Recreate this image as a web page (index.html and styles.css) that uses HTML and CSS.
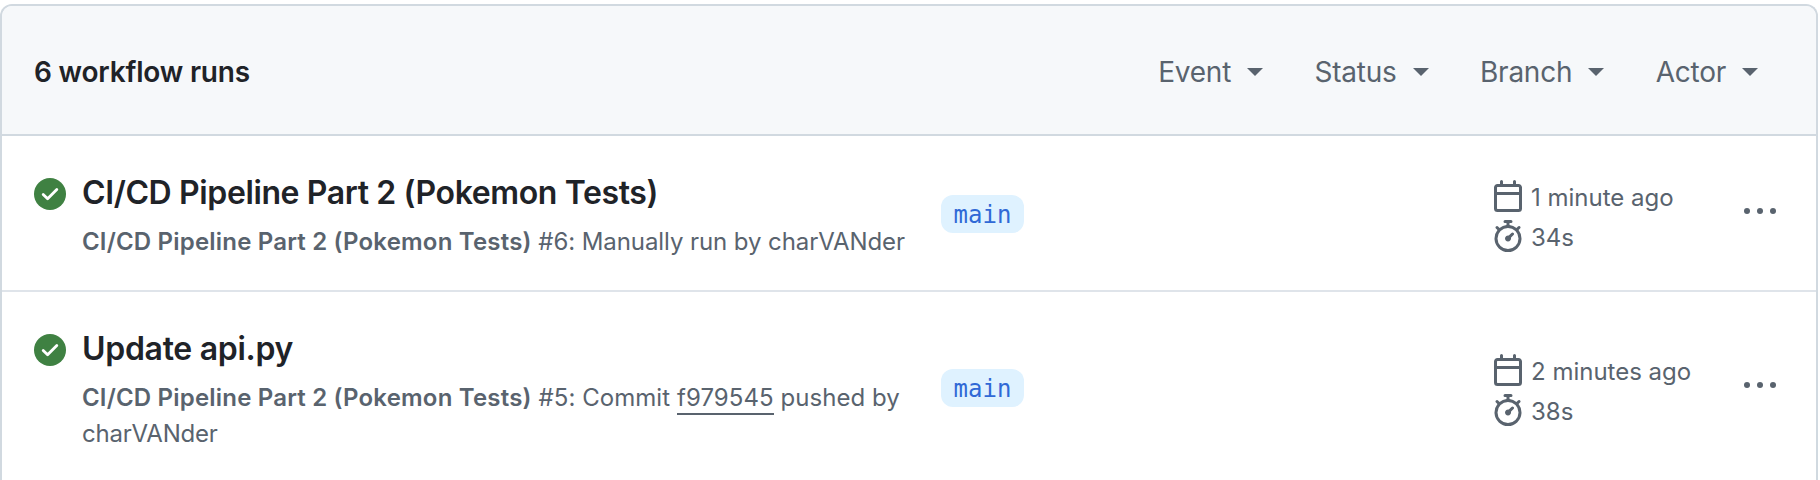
FILE: index.html
```html
<!DOCTYPE html>
<html lang="en">
<head>
<meta charset="utf-8">
<title>Workflow runs</title>
<link rel="stylesheet" href="styles.css">
</head>
<body>
<svg class="sprite" aria-hidden="true">
  <symbol id="check" viewBox="0 0 16 16"><circle cx="8" cy="8" r="8"/><path d="M4.6 8.2 6.8 10.4 11.4 5.7" fill="none" stroke="#fff" stroke-width="1.4" stroke-linecap="round" stroke-linejoin="round"/></symbol>
  <symbol id="calendar" viewBox="0 0 16 16"><path d="M4.75 0a.75.75 0 0 1 .75.75V2h5V.75a.75.75 0 0 1 1.5 0V2h1.25c.966 0 1.75.784 1.75 1.75v10.5A1.75 1.75 0 0 1 13.25 16H2.75A1.75 1.75 0 0 1 1 14.25V3.75C1 2.784 1.784 2 2.75 2H4V.75A.75.75 0 0 1 4.75 0ZM2.5 7.5v6.75c0 .138.112.25.25.25h10.5a.25.25 0 0 0 .25-.25V7.5Zm10.75-4H2.75a.25.25 0 0 0-.25.25V6h11V3.75a.25.25 0 0 0-.25-.25Z"/></symbol>
  <symbol id="stopwatch" viewBox="0 0 16 16"><path d="M5.75.75A.75.75 0 0 1 6.5 0h3a.75.75 0 0 1 0 1.5h-.75v1l-.001.041a6.724 6.724 0 0 1 3.464 1.435l.007-.006.75-.75a.749.749 0 0 1 1.275.326.749.749 0 0 1-.215.734l-.75.75-.006.007a6.75 6.75 0 1 1-10.548 0L2.72 5.03l-.75-.75a.751.751 0 0 1 .018-1.042.751.751 0 0 1 1.042-.018l.75.75.007.006A6.72 6.72 0 0 1 7.25 2.541V1.5H6.5a.75.75 0 0 1-.75-.75ZM8 14.5a5.25 5.25 0 1 0-.001-10.501A5.25 5.25 0 0 0 8 14.5Zm.389-6.7 1.33-1.33a.75.75 0 1 1 1.061 1.06L9.45 8.861A1.503 1.503 0 0 1 8 10.75a1.499 1.499 0 1 1 .389-2.95Z"/></symbol>
  <symbol id="kebab" viewBox="0 0 16 16"><circle cx="1.5" cy="7.5" r="1.5"/><circle cx="8" cy="7.5" r="1.5"/><circle cx="14.5" cy="7.5" r="1.5"/></symbol>
</svg>
<main class="box">
  <header class="box-header">
    <strong class="count">6 workflow runs</strong>
    <nav class="filters">
      <span class="filter">Event</span>
      <span class="filter">Status</span>
      <span class="filter">Branch</span>
      <span class="filter">Actor</span>
    </nav>
  </header>
  <article class="row">
    <svg class="icon check"><use href="#check"/></svg>
    <div class="info">
      <h2 class="title">CI/CD Pipeline Part 2 (Pokemon Tests)</h2>
      <p class="detail manual"><b>CI/CD Pipeline Part 2 (Pokemon Tests)</b> #6: Manually run by charVANder</p>
    </div>
    <div class="branch-cell"><span class="branch">main</span></div>
    <div class="meta">
      <div class="meta-line"><svg class="icon"><use href="#calendar"/></svg><span>1 minute ago</span></div>
      <div class="meta-line"><svg class="icon"><use href="#stopwatch"/></svg><span>34s</span></div>
    </div>
    <svg class="icon kebab"><use href="#kebab"/></svg>
  </article>
  <article class="row">
    <svg class="icon check"><use href="#check"/></svg>
    <div class="info">
      <h2 class="title update">Update api.py</h2>
      <p class="detail"><b>CI/CD Pipeline Part 2 (Pokemon Tests)</b> #5: Commit <a class="sha">f979545</a> pushed by <span class="user">charVANder</span></p>
    </div>
    <div class="branch-cell"><span class="branch">main</span></div>
    <div class="meta">
      <div class="meta-line"><svg class="icon"><use href="#calendar"/></svg><span>2 minutes ago</span></div>
      <div class="meta-line"><svg class="icon"><use href="#stopwatch"/></svg><span>38s</span></div>
    </div>
    <svg class="icon kebab"><use href="#kebab"/></svg>
  </article>
</main>
</body>
</html>
```
FILE: styles.css
```css
* { box-sizing: border-box; }
body { margin: 0; padding-top: 4px; height: 480px; overflow: hidden; background: #fff; color: #1f2328; font-family: Inter, "Liberation Sans", sans-serif; }
.sprite { display: none; }
.box { width: 1818px; height: 476px; border: 2px solid #d1d9e0; border-bottom: 0; border-radius: 12px 12px 0 0; overflow: hidden; }
.box-header { display: flex; align-items: center; justify-content: space-between; height: 130px; padding: 3px 58px 0 32px; background: #f6f8fa; border-bottom: 2px solid #d1d9e0; }
.count { font-size: 28px; font-weight: 600; letter-spacing: -0.19px; }
.filters { display: flex; gap: 51.5px; font-size: 28px; letter-spacing: -0.25px; color: #59636e; }
.filter { display: flex; align-items: center; gap: 16px; }
.filter::after { content: ""; border: 8px solid transparent; border-top-color: currentColor; border-bottom: 0; }
.row { display: grid; grid-template-columns: 48px 834px 550px 278px 32px; align-items: center; padding: 35px 0 30px 32px; border-bottom: 2px solid #dfe4ea; }
.row:last-child { border-bottom: 0; }
.icon { display: block; flex: none; width: 32px; height: 32px; fill: #59636e; }
.check { align-self: start; margin-top: 7px; fill: #3f8142; }
.title { margin: 0 0 9px; font-size: 32px; line-height: 44px; font-weight: 600; letter-spacing: -0.38px; }
.update { letter-spacing: -0.3px; }
.detail { margin: 0; font-size: 24px; line-height: 36px; color: #59636e; letter-spacing: 0.06px; }
.detail b { font-weight: 600; letter-spacing: 0.19px; }
.manual { letter-spacing: -0.08px; }
.sha { padding-bottom: 1px; border-bottom: 2px solid #59636e; }
.user { letter-spacing: -0.2px; }
.branch-cell { padding: 0 0 3px 25px; }
.branch { display: block; width: 83px; height: 38px; padding-top: 1px; border-radius: 12px; background: #dff2ff; color: #3069d6; font: 24px/38px "DejaVu Sans Mono", monospace; text-align: center; }
.meta { padding: 1px 0 0 26px; color: #59636e; font-size: 24px; line-height: 36px; }
.meta-line { display: flex; gap: 7px; height: 32px; white-space: nowrap; }
.meta-line + .meta-line { margin-top: 8px; }
.kebab { margin-bottom: 7px; }
```
